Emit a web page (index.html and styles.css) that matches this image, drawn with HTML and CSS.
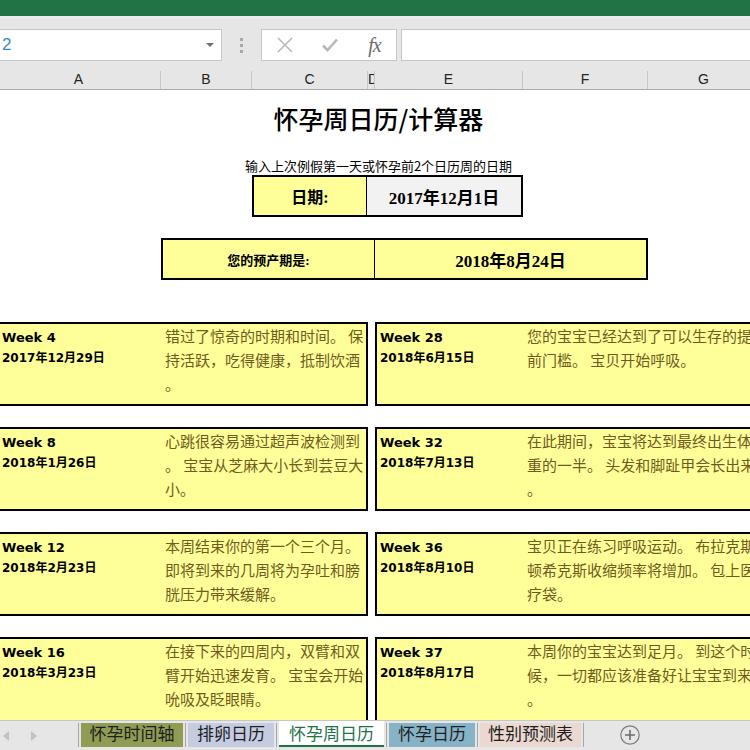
FILE: index.html
```html
<!DOCTYPE html>
<html lang="zh-CN">
<head>
<meta charset="utf-8">
<title>怀孕周日历</title>
<link rel="stylesheet" href="styles.css">
</head>
<body>
<div class="app">
  <div class="titlebar"></div>
  <div class="toolbar">
    <div class="namebox"><span class="ref">2</span><span class="caret"></span></div>
    <div class="grip"><i></i><i></i><i></i></div>
    <div class="fxbox">
      <span class="fxbtn"><svg width="18" height="18" viewBox="0 0 18 18"><path d="M2 2L16 16M16 2L2 16" stroke="#b9b9b9" stroke-width="1.6" fill="none"/></svg></span>
      <span class="fxbtn"><svg width="18" height="18" viewBox="0 0 18 18"><path d="M2 9.5L6.5 14L16 3.5" stroke="#b9b9b9" stroke-width="2.6" fill="none"/></svg></span>
      <span class="fxbtn fx">fx</span>
    </div>
    <div class="formula"></div>
  </div>
  <div class="colheads">
    <div class="ch">A</div><div class="ch">B</div><div class="ch">C</div><div class="ch">D</div><div class="ch">E</div><div class="ch">F</div><div class="ch">G</div>
  </div>
  <div class="sheet">
    <div class="grid">
      <h1 class="title">怀孕周日历/计算器</h1>
      <p class="hint">输入上次例假第一天或怀孕前2个日历周的日期</p>
      <div class="datebox">
        <div class="lbl">日期:</div>
        <div class="val">2017年12月1日</div>
      </div>
      <div class="duebox">
        <div class="lbl small">您的预产期是:</div>
        <div class="val">2018年8月24日</div>
      </div>

      <div class="card left first">
        <div class="meta"><div class="week">Week 4</div><div class="date">2017年12月29日</div></div>
        <div class="desc"><div>错过了惊奇的时期和时间。 保</div><div>持活跃，吃得健康，抵制饮酒</div><div>。</div></div>
      </div>
      <div class="card right first">
        <div class="meta"><div class="week">Week 28</div><div class="date">2018年6月15日</div></div>
        <div class="desc"><div>您的宝宝已经达到了可以生存的提</div><div>前门槛。 宝贝开始呼吸。</div></div>
      </div>

      <div class="card left">
        <div class="meta"><div class="week">Week 8</div><div class="date">2018年1月26日</div></div>
        <div class="desc"><div>心跳很容易通过超声波检测到</div><div>。 宝宝从芝麻大小长到芸豆大</div><div>小。</div></div>
      </div>
      <div class="card right">
        <div class="meta"><div class="week">Week 32</div><div class="date">2018年7月13日</div></div>
        <div class="desc"><div>在此期间，宝宝将达到最终出生体</div><div>重的一半。 头发和脚趾甲会长出来</div><div>。</div></div>
      </div>

      <div class="card left">
        <div class="meta"><div class="week">Week 12</div><div class="date">2018年2月23日</div></div>
        <div class="desc"><div>本周结束你的第一个三个月。</div><div>即将到来的几周将为孕吐和膀</div><div>胱压力带来缓解。</div></div>
      </div>
      <div class="card right">
        <div class="meta"><div class="week">Week 36</div><div class="date">2018年8月10日</div></div>
        <div class="desc"><div>宝贝正在练习呼吸运动。 布拉克斯</div><div>顿希克斯收缩频率将增加。 包上医</div><div>疗袋。</div></div>
      </div>

      <div class="card left tall">
        <div class="meta"><div class="week">Week 16</div><div class="date">2018年3月23日</div></div>
        <div class="desc"><div>在接下来的四周内，双臂和双</div><div>臂开始迅速发育。 宝宝会开始</div><div>吮吸及眨眼睛。</div></div>
      </div>
      <div class="card right tall">
        <div class="meta"><div class="week">Week 37</div><div class="date">2018年8月17日</div></div>
        <div class="desc"><div>本周你的宝宝达到足月。 到这个时</div><div>候，一切都应该准备好让宝宝到来</div><div>。</div></div>
      </div>
    </div>
  </div>
  <div class="tabbar">
    <div class="nav"><span class="tri tri-l"></span><span class="tri tri-r"></span></div>
    <span class="sep"></span>
    <div class="tab t1">怀孕时间轴</div>
    <span class="sep"></span>
    <div class="tab t2">排卵日历</div>
    <span class="sep"></span>
    <div class="tab t3 active">怀孕周日历</div>
    <span class="sep"></span>
    <div class="tab t4">怀孕日历</div>
    <span class="sep"></span>
    <div class="tab t5">性别预测表</div>
    <span class="sep"></span>
    <div class="add"><svg width="20" height="20" viewBox="0 0 20 20"><circle cx="10" cy="10" r="9.2" stroke="#7d7d7d" stroke-width="1.2" fill="none"/><path d="M10 5V15M5 10H15" stroke="#6d6d6d" stroke-width="1.6"/></svg></div>
  </div>
</div>
</body>
</html>
```
FILE: styles.css
```css
* { box-sizing: border-box; margin: 0; padding: 0; }
html, body { width: 750px; height: 750px; overflow: hidden; }
body { font-family: "Noto Sans CJK SC", "Liberation Sans", sans-serif; background: #fff; color: #000; }

.app { display: flex; flex-direction: column; height: 750px; width: 750px; overflow: hidden; }

.titlebar { flex: none; height: 16px; background: #217346; }

.toolbar { flex: none; height: 48px; background: #e6e6e6; border-top: 3px solid #ececec; display: flex; align-items: flex-start; padding-top: 10px; }
.namebox { flex: none; width: 232px; height: 32px; margin-left: -10px; background: #fff; border: 1px solid #c6c6c6; display: flex; align-items: center; justify-content: space-between; padding: 0 7px 0 11px; }
.ref { font-family: "Liberation Sans", sans-serif; font-size: 17px; color: #3d8bc0; }
.caret { width: 0; height: 0; border-left: 4px solid transparent; border-right: 4px solid transparent; border-top: 4px solid #707070; }
.grip { flex: none; width: 39px; height: 32px; display: flex; flex-direction: column; align-items: center; justify-content: center; gap: 3px; }
.grip i { display: block; width: 3px; height: 3px; background: #a8a8a8; }
.fxbox { flex: none; width: 136px; height: 32px; background: #fff; border: 1px solid #c6c6c6; display: flex; align-items: center; }
.fxbtn { flex: none; width: 45px; display: flex; justify-content: center; align-items: center; }
.fx { font-family: "Liberation Serif", serif; font-style: italic; font-size: 20px; color: #6c6c6c; letter-spacing: -1px; }
.formula { flex: 1; height: 32px; margin-left: 4px; margin-right: -2px; background: #fff; border: 1px solid #c6c6c6; }

.colheads { flex: none; height: 26px; margin-left: -3px; width: 763px; background: #e6e6e6; border-bottom: 1px solid #ababab; display: grid; grid-template-columns: 164px 91px 116px 7px 148px 125px 112px; align-items: end; }
.ch { height: 18px; line-height: 17px; border-right: 1px solid #c6c6c6; text-align: center; font-family: "Liberation Sans", sans-serif; font-size: 14px; color: #222; overflow: hidden; }

.sheet { flex: 1; overflow: hidden; background: #fff; }
.grid { margin-left: -3px; width: 763px; display: grid; grid-template-columns: 164px 91px 116px 7px 148px 125px 112px; align-items: start; }

.title { grid-column: 1 / -1; margin-top: 11px; line-height: 34px; text-align: center; font-size: 25px; font-weight: 500; }
.hint { grid-column: 1 / -1; margin-top: 22px; line-height: 18px; text-align: center; font-size: 13px; }

.datebox, .duebox { display: flex; height: 42px; border: 2px solid #000; }
.datebox { grid-column: 3 / 6; }
.duebox { grid-column: 2 / 7; margin-top: 21px; }
.lbl, .val { display: flex; align-items: center; justify-content: center; font-family: "Liberation Serif", "Noto Sans CJK SC", serif; font-weight: bold; font-size: 17px; }
.lbl { background: #ffff99; border-right: 1px solid #000; font-size: 16px; }
.datebox .lbl { width: 113px; }
.datebox .val { flex: 1; background: #f2f2f2; }
.duebox .lbl { width: 212px; }
.duebox .val { flex: 1; background: #ffff99; }
.lbl.small { font-size: 13px; }

.card { height: 84px; margin-top: 21px; border: 2px solid #000; background: #ffff99; display: grid; overflow: hidden; }
.card.first { margin-top: 42px; }
.card.tall { height: 110px; }
.card.left { grid-column: 1 / 4; grid-template-columns: 162px 1fr; }
.card.right { grid-column: 5 / 8; grid-template-columns: 146px 1fr; }
.meta { padding: 3px 0 0 3px; font-family: "DejaVu Sans", "Noto Sans CJK SC", sans-serif; font-weight: bold; line-height: 21px; white-space: nowrap; }
.week { font-size: 13px; }
.date { font-size: 12px; }
.desc { padding-left: 4px; font-size: 15px; line-height: 24px; color: #6e5c1e; white-space: nowrap; }

.tabbar { flex: none; height: 30px; background: #e6e6e6; border-top: 1px solid #c6c6c6; display: flex; align-items: flex-start; }
.nav { flex: none; width: 78px; height: 29px; display: flex; align-items: center; padding-left: 3px; gap: 22px; }
.tri { width: 0; height: 0; border-top: 5px solid transparent; border-bottom: 5px solid transparent; }
.tri-l { border-right: 6px solid #c3c3c3; }
.tri-r { border-left: 6px solid #c3c3c3; }
.sep { flex: none; width: 1px; height: 24px; margin: 2px 2px 0; background: #a6a6a6; }
.nav + .sep { margin-left: 0; }
.tab { flex: none; height: 24px; margin-top: 2px; line-height: 19px; text-align: center; font-size: 17px; color: #1e1e1e; white-space: nowrap; }
.t1 { width: 102px; background: #8f9c54; }
.t2 { width: 86px; background: #c5cce2; }
.t3 { width: 105px; }
.t4 { width: 86px; background: #86b3c6; }
.t5 { width: 101px; background: #ebd8d0; }
.tab.active { background: #fff; color: #217346; height: 26px; margin-top: 0; padding-top: 2px; border-bottom: 2px solid #217346; }
.add { flex: none; margin: 4px 0 0 34px; width: 20px; height: 20px; }
.add svg { display: block; }
```
